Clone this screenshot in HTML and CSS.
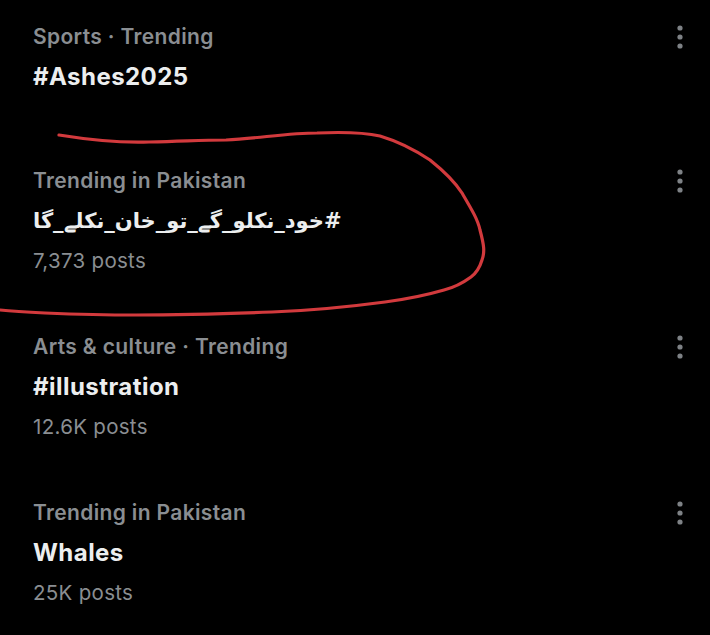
FILE: index.html
```html
<!DOCTYPE html>
<html lang="en">
<head>
<meta charset="utf-8">
<title>Trends</title>
<link rel="stylesheet" href="styles.css">
</head>
<body>
<div class="list">
  <div class="trend first">
    <div class="info">
      <div class="cat">Sports · Trending</div>
      <div class="title">#Ashes2025</div>
    </div>
    <svg class="more" viewBox="0 0 10 24" width="10" height="24"><circle cx="5" cy="3" r="2.6"/><circle cx="5" cy="12" r="2.6"/><circle cx="5" cy="21" r="2.6"/></svg>
  </div>
  <div class="trend">
    <div class="info">
      <div class="cat">Trending in Pakistan</div>
      <div class="title urdu"><span dir="rtl">#خود_نکلو_گے_تو_خان_نکلے_گا</span></div>
      <div class="posts">7,373 posts</div>
    </div>
    <svg class="more" viewBox="0 0 10 24" width="10" height="24"><circle cx="5" cy="3" r="2.6"/><circle cx="5" cy="12" r="2.6"/><circle cx="5" cy="21" r="2.6"/></svg>
  </div>
  <div class="trend">
    <div class="info">
      <div class="cat">Arts &amp; culture · Trending</div>
      <div class="title">#illustration</div>
      <div class="posts">12.6K posts</div>
    </div>
    <svg class="more" viewBox="0 0 10 24" width="10" height="24"><circle cx="5" cy="3" r="2.6"/><circle cx="5" cy="12" r="2.6"/><circle cx="5" cy="21" r="2.6"/></svg>
  </div>
  <div class="trend">
    <div class="info">
      <div class="cat">Trending in Pakistan</div>
      <div class="title">Whales</div>
      <div class="posts">25K posts</div>
    </div>
    <svg class="more" viewBox="0 0 10 24" width="10" height="24"><circle cx="5" cy="3" r="2.6"/><circle cx="5" cy="12" r="2.6"/><circle cx="5" cy="21" r="2.6"/></svg>
  </div>
</div>
<svg class="scribble" viewBox="0 0 710 635" width="710" height="635">
  <path d="M59 135 C 90 140, 120 143, 149 142 C 190 141, 200 140, 226 140 C 260 138, 290 133, 317 133 C 340 132, 362 132, 380 136 C 400 142, 415 150, 430 160 C 445 172, 455 182, 462 193 C 472 210, 478 220, 480 230 C 484 245, 485 252, 482 260 C 479 270, 475 274, 471 277 C 460 285, 452 288, 444 290 C 420 297, 400 300, 385 302 C 340 308, 300 311, 272 312 C 220 314, 180 315, 136 315 C 100 315, 70 314, 45 313 C 25 312, 10 311, 0 310"/>
</svg>
</body>
</html>
```
FILE: styles.css
```css
html, body {
  margin: 0;
  padding: 0;
  background: #000;
}
body {
  width: 710px;
  height: 635px;
  overflow: hidden;
  position: relative;
  font-family: "Inter", "Roboto", "DejaVu Sans", sans-serif;
}
.list {
  display: flex;
  flex-direction: column;
}
.trend {
  display: flex;
  justify-content: space-between;
  align-items: flex-start;
  padding: 23px 25px 23px 33px;
}
.trend.first {
  padding-top: 17px;
  padding-bottom: 41px;
}
.info {
  display: flex;
  flex-direction: column;
}
.cat, .title, .posts {
  height: 40px;
  line-height: 40px;
  white-space: nowrap;
}
.cat {
  color: #8a8e92;
  font-size: 21px;
  font-weight: 600;
  letter-spacing: 0.35px;
}
.title {
  color: #eceeef;
  font-size: 24px;
  font-weight: 700;
  letter-spacing: 0.45px;
}
.title.urdu {
  font-family: "DejaVu Sans", sans-serif;
  font-size: 21px;
  font-weight: 700;
  letter-spacing: 0;
}
.posts {
  color: #8a8e92;
  font-size: 20.5px;
  font-weight: 400;
  letter-spacing: 0.3px;
}
.more {
  fill: #7e8286;
  margin-top: 8px;
}
.scribble {
  position: absolute;
  left: 0;
  top: 0;
  pointer-events: none;
}
.scribble path {
  fill: none;
  stroke: #d23a3d;
  stroke-width: 3.2;
  stroke-linecap: round;
}
```
